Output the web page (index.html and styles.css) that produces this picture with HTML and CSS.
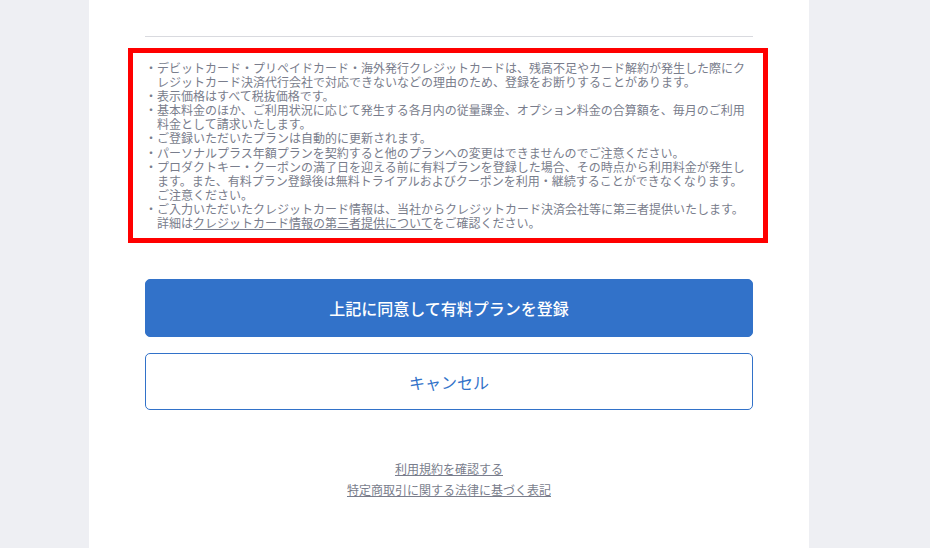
FILE: index.html
```html
<!doctype html>
<html lang="ja">
    <head>
        <meta charset="utf-8">
        <link rel="stylesheet" href="styles.css">
    </head>
    <body>
        <div class="panel">
            <hr class="sep">

            <div class="notes">
                <ul>
                    <li>・デビットカード・プリペイドカード・海外発行クレジットカードは、残高不足やカード解約が発生した際にクレジットカード決済代行会社で対応できないなどの理由のため、登録をお断りすることがあります。</li>
                    <li>・表示価格はすべて税抜価格です。</li>
                    <li>・基本料金のほか、ご利用状況に応じて発生する各月内の従量課金、オプション料金の合算額を、毎月のご利用料金として請求いたします。</li>
                    <li>・ご登録いただいたプランは自動的に更新されます。</li>
                    <li>・パーソナルプラス年額プランを契約すると他のプランへの変更はできませんのでご注意ください。</li>
                    <li>・プロダクトキー・クーポンの満了日を迎える前に有料プランを登録した場合、その時点から利用料金が発生します。また、有料プラン登録後は無料トライアルおよびクーポンを利用・継続することができなくなります。ご注意ください。</li>
                    <li>・ご入力いただいたクレジットカード情報は、当社からクレジットカード決済会社等に第三者提供いたします。詳細は<a href="#">クレジットカード情報の第三者提供について</a>をご確認ください。</li>
                </ul>
            </div>

            <div class="actions">
                <button class="btn btn-primary">上記に同意して有料プランを登録</button>
                <button class="btn btn-outline">キャンセル</button>
            </div>

            <div class="links">
                <a href="#">利用規約を確認する</a>
                <a href="#">特定商取引に関する法律に基づく表記</a>
            </div>
        </div>
    </body>
</html>
```

FILE: styles.css
```css
body {
    margin: 0;
    background: #eeeff3;
    font-family: "Noto Sans CJK JP", "Noto Sans", sans-serif;
    color: #797d8c;
}
.panel {
    width: 608px;
    margin-left: 89px;
    padding: 36px 56px 49px;
    background: #fff;
}
.sep {
    margin: 0;
    border: 0;
    border-top: 1px solid #d9dadf;
}
.notes {
    margin: 11px -15px 0 -17px;
    padding: 8px 10px 8px 12px;
    border: 5px solid #f00;
    font-size: 12px;
    line-height: 14.1px;
}
.notes ul {
    margin: 0;
    padding: 0;
    list-style: none;
}
.notes li {
    padding-left: 1em;
    text-indent: -1em;
}
.notes a {
    color: inherit;
}
.actions {
    display: flex;
    flex-direction: column;
    gap: 16px;
    margin-top: 36px;
}
.btn {
    height: 58px;
    font-family: inherit;
    font-size: 16px;
    border-radius: 5px;
    cursor: pointer;
}
.btn-primary {
    background: #3272c9;
    border: 1px solid #3272c9;
    color: #fff;
    font-weight: 500;
}
.btn-outline {
    height: 57px;
    background: #fff;
    border: 1px solid #3272c9;
    color: #3272c9;
}
.links {
    display: flex;
    flex-direction: column;
    align-items: center;
    margin-top: 48px;
    font-size: 12px;
    line-height: 21px;
}
.links a {
    color: #797d8c;
}
```
